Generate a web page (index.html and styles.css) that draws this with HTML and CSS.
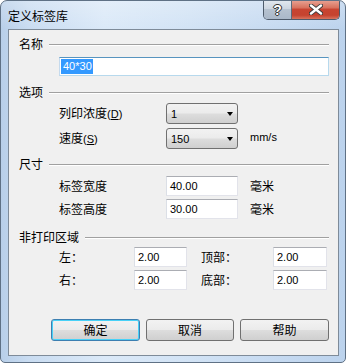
FILE: index.html
```html
<!DOCTYPE html>
<html lang="zh-CN">
<head>
<meta charset="utf-8">
<title>定义标签库</title>
<link rel="stylesheet" href="styles.css">
</head>
<body>
<div class="window">
  <div class="titlebar">
    <div class="title">定义标签库</div>
    <div class="caption">
      <div class="cap-btn help"><span class="q">?</span></div>
      <div class="cap-btn close">
        <svg width="14" height="11" viewBox="0 0 14 11">
          <path d="M2 1.5 L12 9.5 M12 1.5 L2 9.5" stroke="#3a3a3a" stroke-width="4.2" stroke-linecap="round"/>
          <path d="M2 1.5 L12 9.5 M12 1.5 L2 9.5" stroke="#ffffff" stroke-width="2.4" stroke-linecap="round"/>
        </svg>
      </div>
    </div>
  </div>
  <div class="client">
    <div class="group-head h1"><span>名称</span><i class="rule"></i></div>
    <div class="row name-row">
      <div class="input name-input"><span class="sel en">40*30</span></div>
    </div>

    <div class="group-head h2"><span>选项</span><i class="rule"></i></div>
    <div class="row r1">
      <label class="lbl w107">列印浓度<span class="en">(<u>D</u>)</span></label>
      <div class="combo"><span class="en">1</span><i class="arrow"></i></div>
    </div>
    <div class="row r2">
      <label class="lbl w107">速度<span class="en">(<u>S</u>)</span></label>
      <div class="combo"><span class="en">150</span><i class="arrow"></i></div>
      <span class="unit en">mm/s</span>
    </div>

    <div class="group-head h3"><span>尺寸</span><i class="rule"></i></div>
    <div class="row r3">
      <label class="lbl w107">标签宽度</label>
      <div class="input w72"><span class="en">40.00</span></div>
      <span class="unit">毫米</span>
    </div>
    <div class="row r4">
      <label class="lbl w107">标签高度</label>
      <div class="input w72"><span class="en">30.00</span></div>
      <span class="unit">毫米</span>
    </div>

    <div class="group-head h4"><span>非打印区域</span><i class="rule"></i></div>
    <div class="row r5">
      <label class="lbl w75">左：</label>
      <div class="input w53"><span class="en">2.00</span></div>
      <label class="lbl w72 second">顶部：</label>
      <div class="input w54"><span class="en">2.00</span></div>
    </div>
    <div class="row r6">
      <label class="lbl w75">右：</label>
      <div class="input w53"><span class="en">2.00</span></div>
      <label class="lbl w72 second">底部：</label>
      <div class="input w54"><span class="en">2.00</span></div>
    </div>

    <div class="buttons">
      <button class="btn default">确定</button>
      <button class="btn b2">取消</button>
      <button class="btn b3">帮助</button>
    </div>
  </div>
</div>
</body>
</html>
```

FILE: styles.css
```css
html, body {
  margin: 0;
  padding: 0;
  background: #ffffff;
}

body {
  font-family: "Noto Sans CJK SC", "Liberation Sans", sans-serif;
  font-size: 12px;
  color: #000;
}

.en {
  font-family: "Liberation Sans", sans-serif;
  font-size: 11px;
}

.window {
  width: 346px;
  height: 363px;
  box-sizing: border-box;
  border: 1px solid #5f7185;
  border-radius: 7px 7px 5px 5px;
  background:
    linear-gradient(to bottom, rgba(255,255,255,0.25) 0px, rgba(255,255,255,0) 28px),
    linear-gradient(to right, #b8cfe9 0%, #c9dcf1 8%, #dbe9f8 30%, #d2e3f5 55%, #c6daf1 80%, #bcd3ed 100%);
  display: flex;
  flex-direction: column;
  overflow: hidden;
}

.titlebar {
  height: 28px;
  display: flex;
  align-items: flex-start;
  flex-shrink: 0;
}

.title {
  padding-left: 7px;
  padding-top: 6px;
  line-height: 17px;
  font-size: 12px;
  color: #000;
}

.caption {
  margin-left: auto;
  margin-right: 5px;
  margin-top: -1px;
  display: flex;
  height: 20px;
  box-sizing: border-box;
  border: 1px solid #4e5b6b;
  border-top: 0;
  border-radius: 0 0 5px 5px;
  overflow: hidden;
}

.cap-btn {
  display: flex;
  align-items: center;
  justify-content: center;
  height: 100%;
}

.help {
  width: 27px;
  background: linear-gradient(to bottom, #e3e9f0 0%, #cdd6e1 45%, #b6c2d0 50%, #aab8c9 100%);
  border-right: 1px solid #5e6a79;
}

.q {
  font-family: "Liberation Sans", sans-serif;
  font-weight: bold;
  font-size: 14px;
  line-height: 14px;
  color: #fff;
  text-shadow: 0 0 1px #2d2d2d, 0 0 1px #2d2d2d, 1px 0 0 #3a3a3a, -1px 0 0 #3a3a3a, 0 1px 0 #3a3a3a, 0 -1px 0 #3a3a3a;
}

.close {
  width: 47px;
  background: linear-gradient(to bottom, #e9a596 0%, #d8735f 40%, #c84431 50%, #c5432f 80%, #d9735d 100%);
}

.client {
  margin: 0 6px 0 7px;
  height: 327px;
  box-sizing: border-box;
  border: 1px solid #7e8b99;
  background: #f0f0f0;
  display: flex;
  flex-direction: column;
}

.group-head {
  display: flex;
  align-items: center;
  height: 16px;
  line-height: 16px;
  padding-left: 10px;
  padding-right: 9px;
}

.group-head .rule {
  flex: 1;
  margin-left: 6px;
  height: 0;
  border-top: 1px solid #a0a0a0;
  border-bottom: 1px solid #ffffff;
  margin-top: 1px;
}

.h1 { margin-top: 6px; }
.h2 { margin-top: 8px; }
.h3 { margin-top: 7px; }
.h4 { margin-top: 10px; }

.row {
  display: flex;
  align-items: center;
  padding-left: 50px;
}

.name-row { margin-top: 5px; height: 19px; }
.r1 { margin-top: 3px; height: 21px; }
.r2 { margin-top: 4px; height: 21px; }
.r3 { margin-top: 4px; height: 20px; }
.r4 { margin-top: 3px; height: 20px; }
.r5 { margin-top: 2px; height: 20px; }
.r6 { margin-top: 3px; height: 20px; }

.lbl {
  line-height: 16px;
  flex-shrink: 0;
}

.lbl u {
  text-decoration: underline;
}

.w107 { width: 107px; }
.w75 { width: 75px; }
.w72 { width: 72px; }
.second { margin-left: 14px; }

.input {
  box-sizing: border-box;
  height: 100%;
  background: #ffffff;
  border: 1px solid #e2e3ea;
  border-top-color: #abadb3;
  border-left-color: #dbdfe6;
  display: flex;
  align-items: center;
  padding-left: 3px;
  line-height: 13px;
}

.w72.input { width: 72px; }
.w53 { width: 53px; }
.w54 { width: 54px; }

.name-input {
  width: 270px;
  border-color: #b7d9ed;
  border-top-color: #5794bf;
  border-left-color: #c5daed;
  padding-left: 1px;
}

.sel {
  background: #3399ff;
  color: #ffffff;
  line-height: 15px;
  padding: 0 1px 0 2px;
}

.combo {
  width: 72px;
  height: 21px;
  box-sizing: border-box;
  border: 1px solid #707070;
  border-radius: 3px;
  background: linear-gradient(to bottom, #f2f2f2 0%, #ebebeb 48%, #dddddd 52%, #cfcfcf 100%);
  display: flex;
  align-items: center;
  padding-left: 4px;
  padding-right: 4px;
  flex-shrink: 0;
}

.combo .arrow {
  margin-left: auto;
  width: 0;
  height: 0;
  border-left: 3.5px solid transparent;
  border-right: 3.5px solid transparent;
  border-top: 4px solid #000;
  margin-top: 1px;
}

.unit {
  margin-left: 12px;
  line-height: 16px;
}

.r2 .unit { margin-top: -4px; }

.buttons {
  display: flex;
  margin-top: 29px;
  padding-left: 42px;
}

.btn {
  width: 88px;
  height: 22px;
  box-sizing: border-box;
  border: 1px solid #707070;
  border-radius: 3px;
  background: linear-gradient(to bottom, #f2f2f2 0%, #ebebeb 48%, #dddddd 52%, #cfcfcf 100%);
  font-family: "Noto Sans CJK SC", sans-serif;
  font-size: 12px;
  line-height: 16px;
  color: #000;
  padding: 0;
  margin: 0;
}

.btn.default {
  border-color: #3c7fb1;
  box-shadow: inset 0 0 0 1px #48d1f7;
  width: 89px;
}

.b2 { margin-left: 6px; }
.b3 { margin-left: 6px; width: 89px; }
```
